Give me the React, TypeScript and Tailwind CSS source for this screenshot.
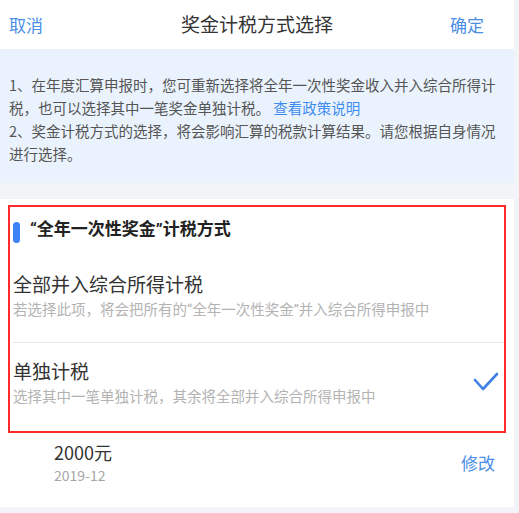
import React from "react";

function Q({ c }: { c: string }) {
  return <span style={{ fontFamily: 'Roboto, "Noto Sans", sans-serif' }}>{c}</span>;
}

export default function App() {
  const font = { fontFamily: '"Noto Sans CJK SC", "Noto Sans", sans-serif' };
  return (
    <div className="min-h-[513px] w-[519px] bg-[#f3f4f8]" style={font}>
      <div className="w-[514px]">
        {/* Header */}
        <div className="grid h-[49px] grid-cols-[1fr_auto_1fr] items-center bg-white">
          <div className="pl-[9px] text-[17px] text-[#4a8ee6]">取消</div>
          <div className="text-[19px] text-[#333333]">奖金计税方式选择</div>
          <div className="flex justify-end pr-[30px] text-[17px] text-[#4a8ee6]">确定</div>
        </div>

        {/* Info */}
        <div className="bg-[#eaf3fd] px-[9px] pb-[18px] pt-[24px] text-[14.5px] leading-[23px] text-[#555555]">
          <p>
            1、在年度汇算申报时，您可重新选择将全年一次性奖金收入并入综合所得计税，也可以选择其中一笔奖金单独计税。{" "}
            <span className="text-[#3f8cf0]">查看政策说明</span>
          </p>
          <p>2、奖金计税方式的选择，将会影响汇算的税款计算结果。请您根据自身情况进行选择。</p>
        </div>

        <div className="h-[16px]" />

        {/* Section */}
        <div className="bg-white pt-[6px]">
          <div className="mx-[8px] border-2 border-[#ff2b2b]">
            <div className="flex items-start gap-[10px] pl-[3px] pt-[10px]">
              <div className="mt-[5px] h-[21px] w-[7px] rounded-full bg-[#3d82f6]" />
              <div className="text-[17px] font-bold leading-[22px] text-[#222222]">
                <Q c="“" />全年一次性奖金<Q c="”" />计税方式
              </div>
            </div>

            <div className="pl-[3px] pb-[21px] pt-[28px]">
              <div className="text-[19px] leading-[26px] text-[#333333]">全部并入综合所得计税</div>
              <div className="mt-[2px] text-[14.5px] leading-[20px] text-[#b3b3b3]">
                若选择此项，将会把所有的<Q c="“" />全年一次性奖金<Q c="”" />并入综合所得申报中
              </div>
            </div>

            <div className="ml-[3px] h-px bg-[#e6e6e6]" />

            <div className="flex items-center justify-between pb-[25px] pl-[3px] pr-[5px] pt-[15px]">
              <div>
                <div className="text-[19px] leading-[26px] text-[#333333]">单独计税</div>
                <div className="mt-[2px] text-[14.5px] leading-[20px] text-[#b3b3b3]">
                  选择其中一笔单独计税，其余将全部并入综合所得申报中
                </div>
              </div>
              <svg width="26" height="20" viewBox="0 0 26 20" fill="none">
                <polyline
                  points="2,8 10,17 24,2"
                  stroke="#3f7fe6"
                  strokeWidth="2.6"
                  strokeLinecap="round"
                  strokeLinejoin="round"
                />
              </svg>
            </div>
          </div>

          <div className="flex items-center justify-between pb-[23px] pl-[54px] pr-[19px] pt-[8px]">
            <div>
              <div className="text-[18px] leading-[22px] text-[#333333]">2000元</div>
              <div className="mt-[3px] text-[14px] leading-[18px] text-[#a6a6a6]">2019-12</div>
            </div>
            <div className="text-[17px] text-[#4a8ee6]">修改</div>
          </div>
        </div>
      </div>
    </div>
  );
}
